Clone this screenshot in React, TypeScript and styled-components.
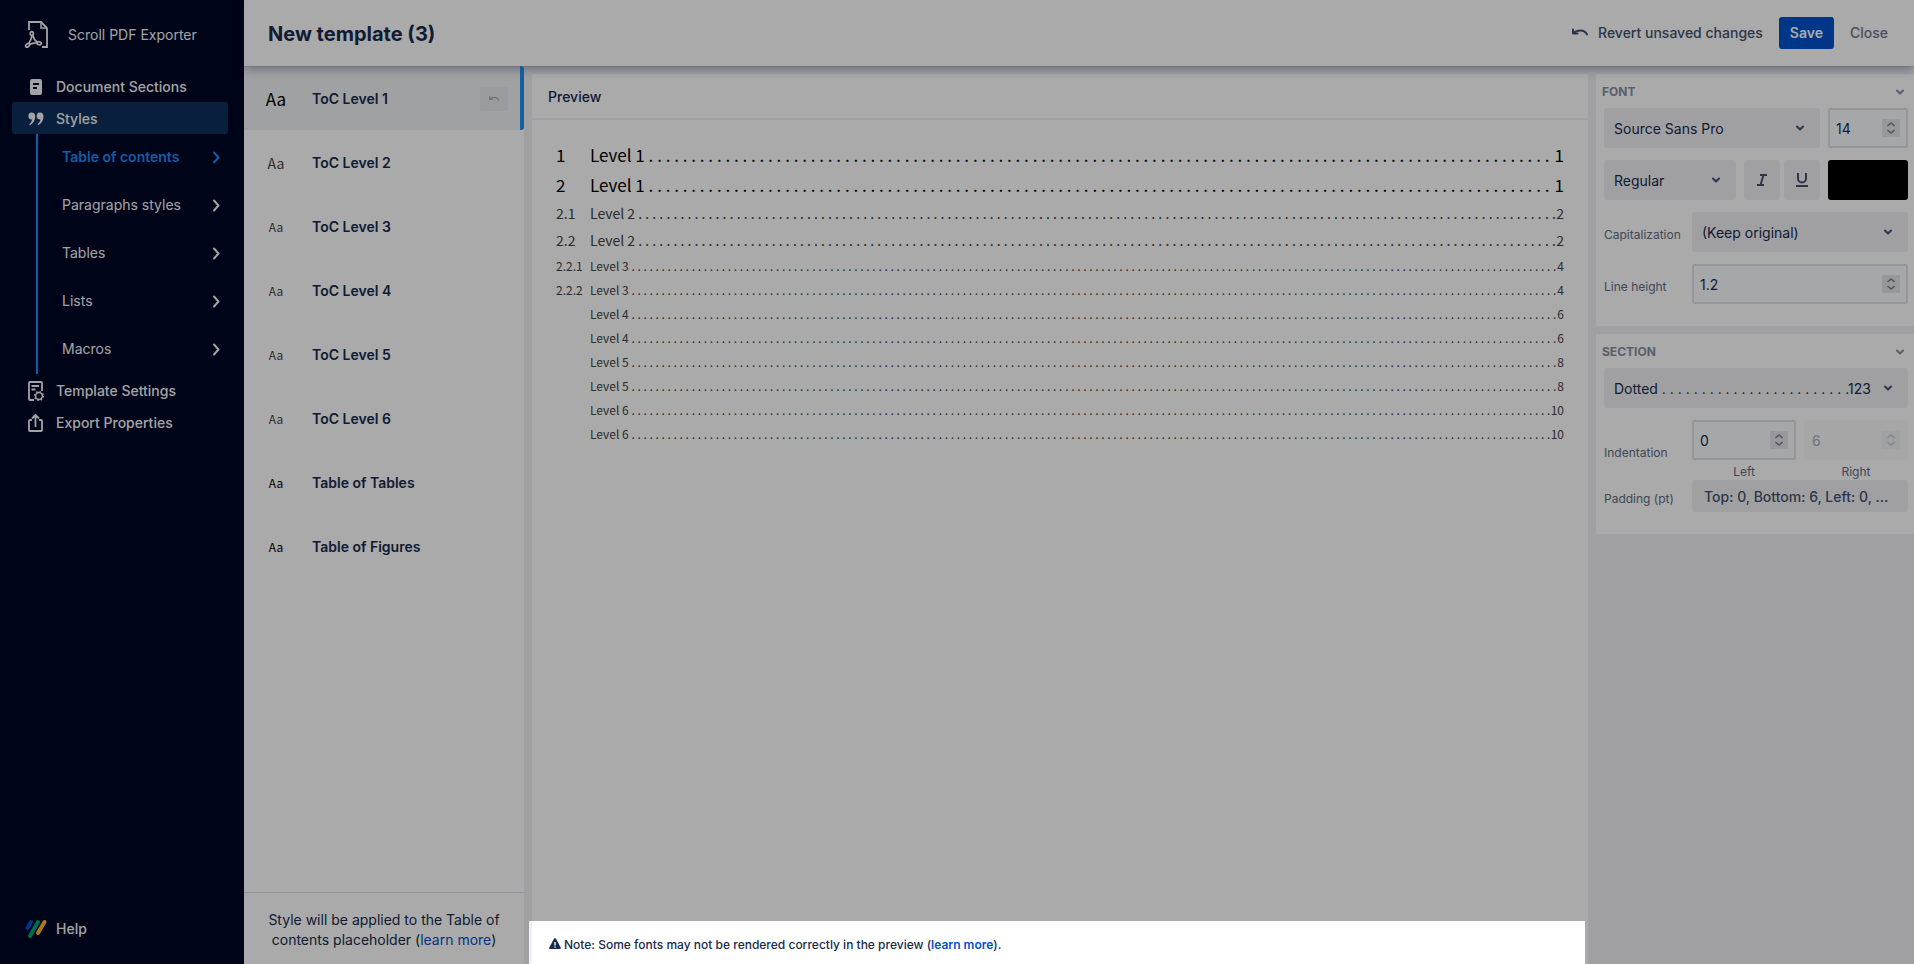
import React from "react";
import styled, { createGlobalStyle } from "styled-components";

const ui = `Inter, "Liberation Sans", sans-serif`;
const doc = `"Noto Sans CJK SC", "Noto Sans", sans-serif`;

const c = {
  navy: "#000625",
  navyActive: "#0d315e",
  navText: "#f4f5f7",
  accent: "#1e8cf0",
  ink: "#172b4d",
  slate: "#42526e",
  muted: "#6b778c",
  caption: "#5e6c84",
  label: "#8590a2",
  line: "#f0f1f4",
  link: "#0052cc",
};

const GlobalStyle = createGlobalStyle`
  *, *::before, *::after { box-sizing: border-box; }
  body {
    margin: 0;
    font: 400 14px/20px ${ui};
    color: ${c.ink};
    background: #fff;
  }
  button, input, select { font: inherit; color: inherit; margin: 0; }
  button { border: 0; background: none; padding: 0; cursor: pointer; }
`;

const Page = styled.div`
  display: flex;
  min-height: 100vh;
  overflow: hidden;
`;

/* Sidebar */
const Sidebar = styled.nav`
  flex: 0 0 244px;
  display: flex;
  flex-direction: column;
  padding: 16px 16px 20px 12px;
  background: ${c.navy};
  color: ${c.navText};
`;
const Brand = styled.div`
  display: flex;
  align-items: center;
  gap: 16px;
  height: 38px;
  padding-left: 12px;
  margin-bottom: 16px;
`;
const NavList = styled.ul`
  list-style: none;
  margin: 0;
  padding: 0;
`;
const NavLink = styled.a<{ $active?: boolean }>`
  display: flex;
  align-items: center;
  gap: 8px;
  height: 32px;
  padding: 2px 0 0 12px;
  border-radius: 3px;
  font-weight: 500;
  color: inherit;
  text-decoration: none;
  background: ${(p) => (p.$active ? c.navyActive : "transparent")};
`;
const IconSlot = styled.span`
  flex: 0 0 auto;
  width: 24px;
  height: 24px;
  display: grid;
  place-items: center;
`;
const SubList = styled(NavList)`
  margin-left: 24px;
  border-left: 2px solid ${c.accent};
`;
const SubLink = styled.a<{ $active?: boolean }>`
  display: flex;
  align-items: center;
  justify-content: space-between;
  height: 48px;
  padding: 0 4px 2px 24px;
  color: ${(p) => (p.$active ? c.accent : "inherit")};
  font-weight: ${(p) => (p.$active ? 600 : 400)};
  text-decoration: none;
`;
const Spacer = styled.div`
  flex: 1;
`;

/* Header */
const Main = styled.div`
  flex: 1;
  min-width: 0;
  display: flex;
  flex-direction: column;
  background: ${c.line};
`;
const Header = styled.header`
  position: relative;
  z-index: 1;
  display: flex;
  align-items: center;
  justify-content: space-between;
  height: 66px;
  padding: 0 26px 0 24px;
  background: #fff;
  box-shadow: 0 0 1px rgba(9, 30, 66, 0.5), 0 3px 10px rgba(9, 30, 66, 0.35);
`;
const Title = styled.h1`
  margin: 0;
  padding-top: 2px;
  font: 700 20px/24px ${ui};
`;
const Actions = styled.div`
  display: flex;
  align-items: center;
  gap: 16px;
`;
const TextButton = styled.button<{ $quiet?: boolean }>`
  display: flex;
  align-items: center;
  gap: 10px;
  height: 32px;
  font-weight: 500;
  color: ${(p) => (p.$quiet ? c.muted : c.slate)};
`;
const SaveButton = styled.button`
  height: 32px;
  padding: 0 11px;
  border-radius: 3px;
  background: ${c.link};
  color: #fff;
  font-weight: 600;
`;

/* Body */
const Columns = styled.div`
  flex: 1;
  display: grid;
  grid-template-columns: 280px minmax(0, 1fr) 318px;
  column-gap: 8px;
`;
const StylePanel = styled.section`
  display: flex;
  flex-direction: column;
  background: #fff;
`;
const StyleRow = styled.li<{ $active?: boolean }>`
  position: relative;
  z-index: ${(p) => (p.$active ? 2 : 0)};
  display: flex;
  align-items: center;
  height: 64px;
  padding: 2px 12px 0 14px;
  border-right: 4px solid ${(p) => (p.$active ? c.accent : "transparent")};
  border-radius: 0 3px 3px 0;
  background: ${(p) => (p.$active ? "rgba(9, 30, 66, 0.06)" : "none")};
  font-weight: 600;
`;
const Sample = styled.span<{ $size: number; $tone: string }>`
  width: 36px;
  margin-right: 18px;
  text-align: center;
  font: 400 ${(p) => p.$size}px/20px ${doc};
  color: ${(p) => p.$tone};
`;
const ResetButton = styled.button`
  margin-left: auto;
  width: 28px;
  height: 24px;
  display: grid;
  place-items: center;
  border-radius: 3px;
  background: rgba(9, 30, 66, 0.04);
  color: #a5adba;
`;
const PanelNote = styled.p`
  margin: 0;
  padding: 17px 24px 14px;
  border-top: 1px solid #dfe1e6;
  text-align: center;
`;
const Link = styled.a<{ $strong?: boolean }>`
  color: ${c.link};
  text-decoration: none;
  font-weight: ${(p) => (p.$strong ? 600 : 400)};
`;

/* Preview */
const Preview = styled.section`
  display: flex;
  flex-direction: column;
  margin-top: 8px;
  background: #fff;
`;
const PreviewTitle = styled.h2`
  margin: 0;
  padding: 13px 16px 11px;
  border-bottom: 2px solid ${c.line};
  font: 500 14px/20px ${ui};
`;
const Toc = styled.ol`
  list-style: none;
  margin: 0;
  padding: 20px 24px;
`;
const TocRow = styled.li<{ $size: number; $height: number; $tone: string }>`
  display: grid;
  grid-template-columns: 34px auto minmax(0, 1fr) auto;
  height: ${(p) => p.$height}px;
  font: 400 ${(p) => p.$size}px/${(p) => p.$height}px ${doc};
  color: ${(p) => p.$tone};
`;
/* Dots that do not fit wrap onto a second line, which is clipped. */
const Leader = styled.span`
  height: 100%;
  overflow: hidden;
  white-space: pre-wrap;
`;
const FontNote = styled.p`
  position: relative;
  margin: 0;
  padding: 14px 17px 9px;
  display: flex;
  align-items: center;
  gap: 3px;
  font-size: 12px;
  font-weight: 500;
`;
/* Dims the whole page except the area around the note. */
const Spotlight = styled.span`
  position: absolute;
  inset: 0 3px 0 -3px;
  z-index: 10;
  pointer-events: none;
  box-shadow: 0 0 0 4000px rgba(0, 0, 0, 0.333);
`;

/* Settings */
const Settings = styled.aside`
  display: flex;
  flex-direction: column;
  gap: 8px;
  margin-top: 8px;
`;
const Card = styled.section`
  padding: 8px 6px 22px;
  background: #fff;
`;
const CardHead = styled.button`
  width: 100%;
  display: flex;
  align-items: center;
  justify-content: space-between;
  height: 20px;
  margin-bottom: 6px;
  font: 700 12px/20px ${ui};
  color: ${c.label};
`;
const Fields = styled.div`
  display: flex;
  flex-direction: column;
  gap: 12px;
  padding-left: 2px;
`;
const Line = styled.div`
  display: flex;
  gap: 8px;
`;
const Labelled = styled.div`
  display: grid;
  grid-template-columns: 88px minmax(0, 1fr);
  align-items: center;
`;
const Caption = styled.label`
  padding-top: 6px;
  font-size: 12px;
  line-height: 20px;
  color: ${c.caption};
`;
const SelectWrap = styled.div`
  position: relative;
  flex: 1;
  min-width: 0;
  svg {
    position: absolute;
    right: 12px;
    top: 12px;
    pointer-events: none;
    color: ${c.slate};
  }
`;
const SelectBox = styled.select`
  appearance: none;
  width: 100%;
  height: 40px;
  padding: 2px 32px 0 10px;
  border: 0;
  border-radius: 3px;
  background: ${c.line};
`;
const NumberWrap = styled.div<{ $disabled?: boolean; $width?: number }>`
  width: ${(p) => (p.$width ? `${p.$width}px` : "100%")};
  height: 40px;
  display: flex;
  align-items: center;
  padding: 0 6px;
  border: 2px solid ${(p) => (p.$disabled ? "#f9fafb" : "#dfe1e6")};
  border-radius: 3px;
  background: ${(p) => (p.$disabled ? "#f9fafb" : "#fafbfc")};
  color: ${(p) => (p.$disabled ? "#a5adba" : c.ink)};
`;
const NumberInput = styled.input`
  flex: 1;
  width: 0;
  min-width: 0;
  padding: 2px 0 0;
  border: 0;
  outline: 0;
  background: none;
`;
const Stepper = styled.button<{ $disabled?: boolean }>`
  width: 18px;
  height: 18px;
  display: grid;
  place-items: center;
  background: ${(p) => (p.$disabled ? "#f1f2f4" : "#e4e4ea")};
  color: ${(p) => (p.$disabled ? "#c1c7d0" : "#7a7a80")};
`;
const Toggles = styled.div`
  display: flex;
  gap: 4px;
`;
const Toggle = styled.button`
  width: 36px;
  height: 40px;
  display: grid;
  place-items: center;
  border-radius: 3px;
  background: ${c.line};
  color: ${c.slate};
`;
const Swatch = styled.input`
  appearance: none;
  width: 80px;
  height: 40px;
  padding: 0;
  border: 0;
  border-radius: 3px;
  background: #000;
  overflow: hidden;
  &::-webkit-color-swatch-wrapper { padding: 0; }
  &::-webkit-color-swatch { border: 0; }
`;
const Side = styled.div`
  flex: 1;
  min-width: 0;
  display: flex;
  flex-direction: column;
`;
const SideCaption = styled.label`
  padding-top: 4px;
  text-align: center;
  font-size: 12px;
  line-height: 16px;
  color: ${c.caption};
`;
const PaddingButton = styled.button`
  height: 32px;
  padding: 2px 12px 0;
  border-radius: 3px;
  background: ${c.line};
  color: ${c.slate};
  font-weight: 500;
  text-align: left;
`;
const Stack = styled.div`
  display: flex;
  flex-direction: column;
`;

/* Icons */
const Chevron = () => (
  <svg width="16" height="16" viewBox="0 0 16 16" fill="none" stroke="currentColor" strokeWidth="2" strokeLinecap="round" strokeLinejoin="round" aria-hidden="true">
    <path d="M5 6.500 8 9.500 11 6.500" />
  </svg>
);
const ChevronRight = () => (
  <svg width="16" height="16" viewBox="0 0 16 16" fill="none" stroke="currentColor" strokeWidth="2" strokeLinecap="round" strokeLinejoin="round" aria-hidden="true">
    <path d="M6 3.500 10.500 8.500 6 13.500" />
  </svg>
);
const Undo = ({ size = 16 }: { size?: number }) => (
  <svg width={size} height={size} viewBox="0 0 16 16" fill="none" stroke="currentColor" strokeWidth="2" strokeLinecap="round" strokeLinejoin="round" aria-hidden="true">
    <path d="M1 4.500v4h4.600" />
    <path d="M2 7.900C4.500 4.800 12.500 3.800 15 9.400" />
  </svg>
);
const Steps = () => (
  <svg width="12" height="16" viewBox="0 0 12 16" fill="none" stroke="currentColor" strokeWidth="1.500" strokeLinecap="round" strokeLinejoin="round" aria-hidden="true">
    <path d="M3 5.500 6 3 9 5.500M3 10.500 6 13 9 10.500" />
  </svg>
);
const PdfLogo = () => (
  <svg width="28" height="28" viewBox="0 0 28 28" fill="none" stroke="currentColor" strokeWidth="1.800" aria-hidden="true">
    <path d="M5 9V1h12l6 6v19h-5" />
    <path d="M17 1v6h6" strokeWidth="1.500" />
    <g strokeWidth="1.700">
      <ellipse cx="7.800" cy="12.600" rx="1.500" ry="1.900" />
      <ellipse cx="3.600" cy="24.300" rx="2.200" ry="1.500" transform="rotate(-38 3.600 24.300)" />
      <ellipse cx="15.200" cy="22.300" rx="2.100" ry="1.500" transform="rotate(12 15.200 22.300)" />
      <path d="M8.600 14.300c.8 2.900 2.400 5.400 4.800 6.900M7.900 14.500c-.4 3-1.500 5.600-3.300 8.400M5.300 23.500c2.500-1.300 5-1.800 7.900-1.600" />
    </g>
  </svg>
);
const DocIcon = () => (
  <svg width="16" height="18" viewBox="0 0 16 18" aria-hidden="true">
    <path fill="currentColor" fillRule="evenodd" d="M4 1h8a2 2 0 0 1 2 2v12a2 2 0 0 1-2 2H4a2 2 0 0 1-2-2V3a2 2 0 0 1 2-2zm1 4v2h6V5zm0 4v2h4V9z" />
  </svg>
);
const QuoteIcon = () => (
  <svg width="16" height="16" viewBox="0 0 16 16" aria-hidden="true">
    <g fill="currentColor">
      <path d="M3.700 1.500A3.500 3.500 0 0 1 7.200 5.200c0 4-2.200 7.600-5.400 9l-.6-.9c1.700-1.300 2.700-2.900 2.900-4.800A3.500 3.500 0 1 1 3.700 1.500z" />
      <path d="M12 1.500a3.500 3.500 0 0 1 3.500 3.700c0 4-2.200 7.600-5.400 9l-.6-.9c1.700-1.300 2.700-2.900 2.900-4.800A3.500 3.500 0 1 1 12 1.500z" />
    </g>
  </svg>
);
const SettingsIcon = () => (
  <svg width="16" height="20" viewBox="0 0 16 20" fill="none" stroke="currentColor" strokeWidth="1.800" aria-hidden="true">
    <path d="M6 19H2a1 1 0 0 1-1-1V2a1 1 0 0 1 1-1h11a1 1 0 0 1 1 1v8" />
    <path d="M3.500 5H11M3.500 8.500H7.500" />
    <circle cx="11" cy="15" r="3.400" strokeWidth="1.500" />
    <circle cx="11" cy="15" r="4.500" strokeWidth="1.300" strokeDasharray="1.500 2.034" />
  </svg>
);
const ExportIcon = () => (
  <svg width="16" height="20" viewBox="0 0 16 20" fill="none" stroke="currentColor" strokeWidth="1.800" strokeLinejoin="round" aria-hidden="true">
    <path d="M4 7H2a1 1 0 0 0-1 1v9a1 1 0 0 0 1 1h11a1 1 0 0 0 1-1V8a1 1 0 0 0-1-1h-2M7.500 14V2.500M4 5.500 7.500 2 11 5.500" />
  </svg>
);
const HelpLogo = () => (
  <svg width="24" height="20" viewBox="0 0 24 20" fill="none" strokeWidth="4" strokeLinecap="round" aria-hidden="true">
    <path d="M3.500 9 7 3" stroke="#0052cc" />
    <path d="M6 17 14 3" stroke="#00a36c" />
    <path d="M14 14 20.500 3" stroke="#ffb62e" />
  </svg>
);
const Warning = () => (
  <svg width="12" height="16" viewBox="0 0 12 16" aria-hidden="true">
    <path fill="currentColor" fillRule="evenodd" d="M5.200 1.600a1 1 0 0 1 1.600 0l4.900 9a1 1 0 0 1-.8 1.400H1.100a1 1 0 0 1-.8-1.400zM5.300 5v3.600h1.400V5zm0 4.500v1.300h1.400V9.500z" />
  </svg>
);
const Italic = () => (
  <svg width="12" height="14" viewBox="0 0 12 14" fill="none" stroke="currentColor" strokeWidth="2" aria-hidden="true">
    <path d="M4 2h7M1 12h7M7.500 2 4.500 12" />
  </svg>
);
const Underline = () => (
  <svg width="14" height="14" viewBox="0 0 14 14" fill="none" stroke="currentColor" strokeWidth="2" aria-hidden="true">
    <path d="M3 0v5.500a4 4 0 0 0 8 0V0M1 13h12" />
  </svg>
);

const subItems = ["Table of contents", "Paragraphs styles", "Tables", "Lists", "Macros"];

const tone = { strong: "#000", soft: "#444" };

const styleItems = [
  { name: "ToC Level 1", size: 17, tone: tone.strong },
  { name: "ToC Level 2", size: 14, tone: tone.soft },
  { name: "ToC Level 3", size: 12, tone: tone.soft },
  { name: "ToC Level 4", size: 12, tone: tone.soft },
  { name: "ToC Level 5", size: 12, tone: tone.soft },
  { name: "ToC Level 6", size: 12, tone: tone.soft },
  { name: "Table of Tables", size: 12, tone: tone.strong },
  { name: "Table of Figures", size: 12, tone: tone.strong },
];

const large = { size: 17, height: 30, tone: tone.strong };
const medium = { size: 14, height: 27, tone: tone.soft };
const small = { size: 12, height: 24, tone: tone.soft };

const tocRows = [
  { number: "1", level: 1, page: 1, type: large, dots: 106 },
  { number: "2", level: 1, page: 1, type: large, dots: 106 },
  { number: "2.1", level: 2, page: 2, type: medium, dots: 131 },
  { number: "2.2", level: 2, page: 2, type: medium, dots: 131 },
  { number: "2.2.1", level: 3, page: 4, type: small, dots: 154 },
  { number: "2.2.2", level: 3, page: 4, type: small, dots: 154 },
  { number: "", level: 4, page: 6, type: small, dots: 154 },
  { number: "", level: 4, page: 6, type: small, dots: 154 },
  { number: "", level: 5, page: 8, type: small, dots: 154 },
  { number: "", level: 5, page: 8, type: small, dots: 154 },
  { number: "", level: 6, page: 10, type: small, dots: 153 },
  { number: "", level: 6, page: 10, type: small, dots: 153 },
];

function Select({ id, label, value }: { id: string; label?: string; value: string }) {
  return (
    <SelectWrap>
      <SelectBox id={id} aria-label={label}>
        <option>{value}</option>
      </SelectBox>
      <Chevron />
    </SelectWrap>
  );
}

function NumberField({ id, label, value, width, disabled }: { id: string; label?: string; value: string; width?: number; disabled?: boolean }) {
  return (
    <NumberWrap $width={width} $disabled={disabled}>
      <NumberInput id={id} aria-label={label} inputMode="decimal" defaultValue={value} disabled={disabled} />
      <Stepper type="button" aria-label="Change value" disabled={disabled} $disabled={disabled}>
        <Steps />
      </Stepper>
    </NumberWrap>
  );
}

export default function App() {
  return (
    <>
      <GlobalStyle />
      <Page>
        <Sidebar>
          <Brand>
            <PdfLogo />
            Scroll PDF Exporter
          </Brand>
          <NavList>
            <li>
              <NavLink href="#sections"><IconSlot><DocIcon /></IconSlot>Document Sections</NavLink>
            </li>
            <li>
              <NavLink href="#styles" $active><IconSlot><QuoteIcon /></IconSlot>Styles</NavLink>
              <SubList>
                {subItems.map((name, i) => (
                  <li key={name}>
                    <SubLink href="#styles" $active={i === 0}>{name}<ChevronRight /></SubLink>
                  </li>
                ))}
              </SubList>
            </li>
            <li>
              <NavLink href="#settings"><IconSlot><SettingsIcon /></IconSlot>Template Settings</NavLink>
            </li>
            <li>
              <NavLink href="#export"><IconSlot><ExportIcon /></IconSlot>Export Properties</NavLink>
            </li>
          </NavList>
          <Spacer />
          <NavLink href="#help"><IconSlot><HelpLogo /></IconSlot>Help</NavLink>
        </Sidebar>

        <Main>
          <Header>
            <Title>New template (3)</Title>
            <Actions>
              <TextButton type="button"><Undo />Revert unsaved changes</TextButton>
              <SaveButton type="button">Save</SaveButton>
              <TextButton type="button" $quiet>Close</TextButton>
            </Actions>
          </Header>

          <Columns>
            <StylePanel>
              <NavList>
                {styleItems.map((item, i) => (
                  <StyleRow key={item.name} $active={i === 0}>
                    <Sample $size={item.size} $tone={item.tone}>Aa</Sample>
                    {item.name}
                    {i === 0 && <ResetButton type="button" aria-label="Revert"><Undo size={10} /></ResetButton>}
                  </StyleRow>
                ))}
              </NavList>
              <Spacer />
              <PanelNote>
                Style will be applied to the Table of contents placeholder (<Link href="#placeholder">learn more</Link>)
              </PanelNote>
            </StylePanel>

            <Preview>
              <PreviewTitle>Preview</PreviewTitle>
              <Toc>
                {tocRows.map((row, i) => (
                  <TocRow key={i} $size={row.type.size} $height={row.type.height} $tone={row.type.tone}>
                    <span>{row.number}</span>
                    <span>Level {row.level}</span>
                    <Leader aria-hidden="true">{" .".repeat(row.dots)}</Leader>
                    <span>{row.page}</span>
                  </TocRow>
                ))}
              </Toc>
              <Spacer />
              <FontNote>
                <Warning />
                <span>
                  Note: Some fonts may not be rendered correctly in the preview (<Link href="#fonts" $strong>learn more</Link>).
                </span>
                <Spotlight />
              </FontNote>
            </Preview>

            <Settings>
              <Card>
                <CardHead type="button">FONT<Chevron /></CardHead>
                <Fields>
                  <Line>
                    <Select id="family" label="Font family" value="Source Sans Pro" />
                    <NumberField id="size" label="Font size" value="14" width={80} />
                  </Line>
                  <Line>
                    <Select id="weight" label="Font weight" value="Regular" />
                    <Toggles>
                      <Toggle type="button" aria-label="Italic"><Italic /></Toggle>
                      <Toggle type="button" aria-label="Underline"><Underline /></Toggle>
                    </Toggles>
                    <Swatch type="color" aria-label="Font color" defaultValue="#000000" />
                  </Line>
                  <Labelled>
                    <Caption htmlFor="caps">Capitalization</Caption>
                    <Select id="caps" value="(Keep original)" />
                  </Labelled>
                  <Labelled>
                    <Caption htmlFor="line">Line height</Caption>
                    <NumberField id="line" value="1.2" />
                  </Labelled>
                </Fields>
              </Card>
              <Card>
                <CardHead type="button">SECTION<Chevron /></CardHead>
                <Fields>
                  <Select id="leader" label="Leader" value={"Dotted " + ". ".repeat(23) + ".123"} />
                  <Stack>
                    <Labelled>
                      <Caption as="span">Indentation</Caption>
                      <Line>
                        <Side>
                          <NumberField id="left" value="0" />
                          <SideCaption htmlFor="left">Left</SideCaption>
                        </Side>
                        <Side>
                          <NumberField id="right" value="6" disabled />
                          <SideCaption htmlFor="right">Right</SideCaption>
                        </Side>
                      </Line>
                    </Labelled>
                    <Labelled>
                      <Caption htmlFor="padding">Padding (pt)</Caption>
                      <PaddingButton id="padding" type="button">Top: 0, Bottom: 6, Left: 0, ...</PaddingButton>
                    </Labelled>
                  </Stack>
                </Fields>
              </Card>
            </Settings>
          </Columns>
        </Main>
      </Page>
    </>
  );
}
